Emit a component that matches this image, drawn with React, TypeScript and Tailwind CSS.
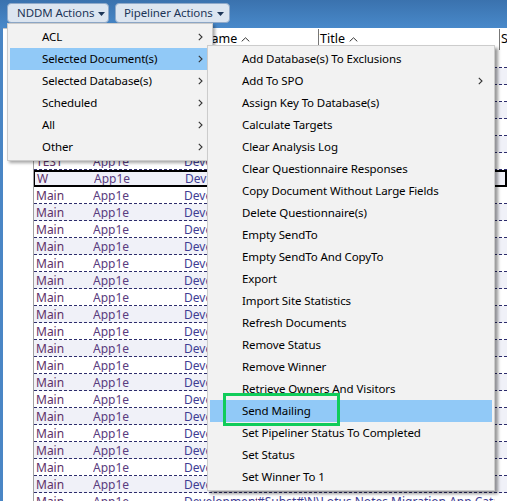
import React from "react";

const mainItems = ["ACL", "Selected Document(s)", "Selected Database(s)", "Scheduled", "All", "Other"];
const subItems: { label: string; arrow?: boolean }[] = [
  { label: "Add Database(s) To Exclusions" },
  { label: "Add To SPO", arrow: true },
  { label: "Assign Key To Database(s)" },
  { label: "Calculate Targets" },
  { label: "Clear Analysis Log" },
  { label: "Clear Questionnaire Responses" },
  { label: "Copy Document Without Large Fields" },
  { label: "Delete Questionnaire(s)" },
  { label: "Empty SendTo" },
  { label: "Empty SendTo And CopyTo" },
  { label: "Export" },
  { label: "Import Site Statistics" },
  { label: "Refresh Documents" },
  { label: "Remove Status" },
  { label: "Remove Winner" },
  { label: "Retrieve Owners And Visitors" },
  { label: "Send Mailing" },
  { label: "Set Pipeliner Status To Completed" },
  { label: "Set Status" },
  { label: "Set Winner To 1" },
];

type Row = { a: string; b: string; c: string; d: string; e: string };
const rows: Row[] = Array.from({ length: 27 }, (_, i) => {
  if (i === 6) return { a: "TEST", b: "App1e", c: "Development", d: "TEST", e: "Test Application" };
  if (i === 7) return { a: "W", b: "App1e", c: "Development", d: "W", e: "W Application" };
  return {
    a: "Main",
    b: "App1e",
    c: "Development",
    d: "#Subst#\\",
    e: "N\\Lotus Notes Migration App Catalog",
  };
});

function Caret() {
  return (
    <svg width="7" height="4" viewBox="0 0 7 4" className="ml-[4px] mt-[1px] shrink-0">
      <path d="M0 0 H7 L3.5 4 Z" fill="#1d3557" />
    </svg>
  );
}

function Chevron() {
  return (
    <svg width="5" height="8" viewBox="0 0 5 8" className="shrink-0">
      <path d="M0.8 0.8 L4 4 L0.8 7.2" fill="none" stroke="#333" strokeWidth="1.1" />
    </svg>
  );
}

function SortUp() {
  return (
    <svg width="9" height="5" viewBox="0 0 9 5" className="ml-[4px] shrink-0">
      <path d="M0.7 4.4 L4.5 0.8 L8.3 4.4" fill="none" stroke="#333" strokeWidth="1" />
    </svg>
  );
}

function Cells({ r }: { r: Row }) {
  return (
    <>
      <div className="w-[59px] shrink-0 overflow-hidden pl-[2px]">{r.a}</div>
      <div className="w-[91px] shrink-0 overflow-hidden text-[#5a3c80]">{r.b}</div>
      <div className="w-[73px] shrink-0 overflow-hidden text-[#3f3d94]">{r.c}</div>
      <div className="w-[50px] shrink-0 overflow-hidden text-[#3f3d94]">{r.d}</div>
      <div className="w-[188px] shrink-0 overflow-hidden text-[#3f3d94]">{r.e}</div>
      <div className="flex-1 min-w-0" />
    </>
  );
}

export default function App() {
  return (
    <div className="relative w-[507px] h-[501px] overflow-hidden bg-white font-['Noto_Sans',sans-serif] text-black">
      {/* toolbar */}
      <div className="h-[28px] bg-[linear-gradient(to_bottom,#3a72ae,#4889ca)] flex items-start gap-[6px] pl-[7px] pt-[3px]">
        <div className="h-[20px] w-[102px] shrink-0 rounded-[4px] border border-[#8fa9c9] bg-[#dce5f0] flex items-center pl-[9px] text-[11.5px] tracking-[-0.1px] text-[#1d3557] leading-none whitespace-nowrap">
          NDDM Actions
          <Caret />
        </div>
        <div className="h-[20px] w-[115px] shrink-0 rounded-[4px] border border-[#8fa9c9] bg-[#dce5f0] flex items-center pl-[8px] text-[11.5px] tracking-[-0.1px] text-[#1d3557] leading-none whitespace-nowrap">
          Pipeliner Actions
          <Caret />
        </div>
      </div>

      {/* content */}
      <div className="flex h-[473px]">
        <div className="w-[3px] shrink-0 bg-[#4a86c5]" />
        <div className="w-[30px] shrink-0 bg-white border-t border-[#c8c8c8]" />
        <div className="flex-1 min-w-0 overflow-hidden border-l border-[#a0a0a0] flex flex-col">
          {/* header */}
          <div className="h-[23px] shrink-0 flex text-[12.5px] leading-none bg-white whitespace-nowrap">
            <div className="w-[165px] shrink-0" />
            <div className="w-[119px] shrink-0 flex items-center pl-[3px]">
              Name
              <SortUp />
            </div>
            <div className="w-[181px] shrink-0 border-l border-[#777] flex items-center pl-[1px] my-[1px]">
              Title
              <SortUp />
            </div>
            <div className="flex-1 min-w-0 border-l border-[#777] flex items-center pl-[1px] my-[1px]">Site</div>
          </div>
          {/* rows */}
          {rows.map((r, i) => {
            const selected = i === 7;
            const bg = i % 2 === 1 ? "bg-[#f0f1f8]" : "bg-white";
            return (
              <div key={i} className={`h-[17px] shrink-0 flex flex-col ${bg}`}>
                {selected ? (
                  <div className="h-[17px] border-2 border-black flex items-end text-[12px] leading-none text-[#5e3068] whitespace-nowrap -ml-px">
                    <Cells r={r} />
                  </div>
                ) : (
                  <>
                    <div className="h-[16px] flex items-end pb-[1px] text-[12px] leading-none text-[#5e3068] whitespace-nowrap">
                      <Cells r={r} />
                    </div>
                    <div className="h-px shrink-0 bg-[repeating-linear-gradient(90deg,#2c2c6c_0px,#2c2c6c_3px,transparent_3px,transparent_5px)]" />
                  </>
                )}
              </div>
            );
          })}
        </div>
      </div>

      {/* main menu */}
      <div className="absolute left-[7px] top-[23px] w-[206px] bg-[#f2f2f2] border border-[#cccccc] shadow-[2px_2px_3px_rgba(0,0,0,0.35)] py-[2px] px-[2px] text-[11.5px] tracking-[-0.1px] whitespace-nowrap">
        {mainItems.map((m, i) => (
          <div
            key={m}
            className={`h-[22px] flex items-center pl-[32px] pr-[7px] ${i === 1 ? "bg-[#91c9f7]" : ""}`}
          >
            <span className="flex-1">{m}</span>
            <Chevron />
          </div>
        ))}
      </div>

      {/* submenu */}
      <div className="absolute left-[207px] top-[45px] w-[288px] bg-[#f2f2f2] border border-[#cccccc] shadow-[3px_3px_3px_rgba(0,0,0,0.4)] py-[2px] px-[2px] text-[11.5px] tracking-[-0.1px] whitespace-nowrap">
        {subItems.map((s) => (
          <div
            key={s.label}
            className={`relative h-[22px] flex items-center pl-[32px] pr-[9px] ${s.label === "Send Mailing" ? "bg-[#91c9f7]" : ""}`}
          >
            <span className="flex-1">{s.label}</span>
            {s.arrow && <Chevron />}
            {s.label === "Send Mailing" && (
              <div className="absolute left-[13px] top-[-7px] w-[117px] h-[33px] border-[3px] border-[#10cc5a]" />
            )}
          </div>
        ))}
      </div>
    </div>
  );
}
